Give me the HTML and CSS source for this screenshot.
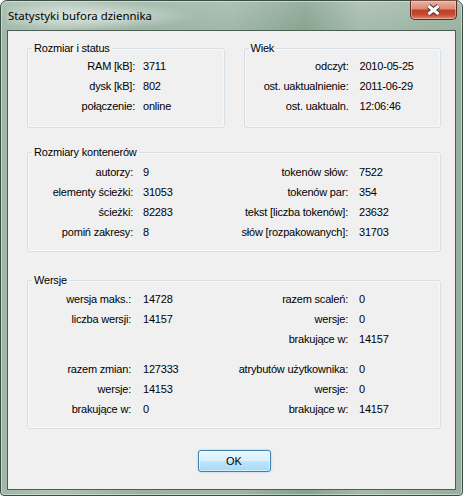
FILE: index.html
```html
<!DOCTYPE html>
<html lang="pl">
<head>
<meta charset="utf-8">
<title>Statystyki bufora dziennika</title>
<link rel="stylesheet" href="styles.css">
</head>
<body>
<div class="window">
  <div class="titlebar">
    <span class="title">Statystyki bufora dziennika</span>
    <button class="close" aria-label="Zamknij">
      <svg width="15" height="12" viewBox="0 0 15 12">
        <path d="M2.5 2 L12.5 10 M12.5 2 L2.5 10" stroke="#473533" stroke-width="5" stroke-linecap="butt" fill="none"/>
        <path d="M2.5 2 L12.5 10 M12.5 2 L2.5 10" stroke="#ffffff" stroke-width="3" stroke-linecap="butt" fill="none"/>
      </svg>
    </button>
  </div>
  <div class="client">
    <div class="toprow">
      <fieldset class="group g1">
        <legend>Rozmiar i status</legend>
        <div class="rows two lab8">
          <span class="lab">RAM [kB]:</span><span class="val">3711</span>
          <span class="lab">dysk [kB]:</span><span class="val">802</span>
          <span class="lab">połączenie:</span><span class="val">online</span>
        </div>
      </fieldset>
      <fieldset class="group g2">
        <legend>Wiek</legend>
        <div class="rows two lab11">
          <span class="lab">odczyt:</span><span class="val">2010-05-25</span>
          <span class="lab">ost. uaktualnienie:</span><span class="val">2011-06-29</span>
          <span class="lab">ost. uaktualn.</span><span class="val">12:06:46</span>
        </div>
      </fieldset>
    </div>
    <fieldset class="group g3">
      <legend>Rozmiary kontenerów</legend>
      <div class="rows four">
        <span class="lab l1">autorzy:</span><span class="val">9</span><span class="lab l2">tokenów słów:</span><span class="val">7522</span>
        <span class="lab l1">elementy ścieżki:</span><span class="val">31053</span><span class="lab l2">tokenów par:</span><span class="val">354</span>
        <span class="lab l1">ścieżki:</span><span class="val">82283</span><span class="lab l2">tekst [liczba tokenów]:</span><span class="val">23632</span>
        <span class="lab l1">pomiń zakresy:</span><span class="val">8</span><span class="lab l2">słów [rozpakowanych]:</span><span class="val">31703</span>
      </div>
    </fieldset>
    <fieldset class="group g4">
      <legend>Wersje</legend>
      <div class="rows four">
        <span class="lab l1">wersja maks.:</span><span class="val">14728</span><span class="lab l2">razem scaleń:</span><span class="val">0</span>
        <span class="lab l1">liczba wersji:</span><span class="val">14157</span><span class="lab l2">wersje:</span><span class="val">0</span>
        <span class="lab l1"></span><span class="val"></span><span class="lab l2">brakujące w:</span><span class="val">14157</span>
      </div>
      <div class="rows four second">
        <span class="lab l1">razem zmian:</span><span class="val">127333</span><span class="lab l2">atrybutów użytkownika:</span><span class="val">0</span>
        <span class="lab l1">wersje:</span><span class="val">14153</span><span class="lab l2">wersje:</span><span class="val">0</span>
        <span class="lab l1">brakujące w:</span><span class="val">0</span><span class="lab l2">brakujące w:</span><span class="val">14157</span>
      </div>
    </fieldset>
    <div class="actions">
      <button class="ok">OK</button>
    </div>
  </div>
</div>
</body>
</html>
```

FILE: styles.css
```css
html, body {
  margin: 0;
  padding: 0;
  background: #ffffff;
}

body {
  font-family: "Liberation Sans", Arial, sans-serif;
  font-size: 11px;
  letter-spacing: -0.2px;
  color: #000;
}

.window {
  box-sizing: border-box;
  width: 463px;
  height: 496px;
  border: 1px solid #3c4d44;
  border-radius: 7px 7px 4px 4px;
  padding: 0 6px 5px 6px;
  display: flex;
  flex-direction: column;
  background:
    linear-gradient(180deg, rgba(255,255,255,0.16) 0px, rgba(255,255,255,0) 34px),
    linear-gradient(90deg, #9fb8a8 0%, #adc2b4 12%, #98b2a1 30%, #9fb7a7 50%, #84a28e 66%, #a4baab 78%, #96b09f 100%);
  box-shadow: inset 0 0 0 1px rgba(230, 240, 234, 0.55);
}

.titlebar {
  height: 28px;
  display: flex;
  justify-content: space-between;
  align-items: flex-start;
  padding-left: 1px;
  background: radial-gradient(ellipse 110px 14px at 80px 15px, rgba(235,242,238,0.75), rgba(235,242,238,0));
}

.title {
  font-family: "Noto Sans", "Open Sans", sans-serif;
  font-size: 11.4px;
  letter-spacing: 0;
  line-height: 16px;
  margin-top: 7px;
  color: #000;
}

.close {
  width: 47px;
  height: 20px;
  margin-top: -1px;
  margin-right: -1px;
  padding: 0;
  border: 1px solid #5b2b22;
  border-top-color: #7e5048;
  border-radius: 0 0 5px 5px;
  background: linear-gradient(180deg, #edb0a0 0%, #d98a76 45%, #c13f27 50%, #c44a32 75%, #df876d 100%);
  box-shadow: inset 0 0 0 1px rgba(255, 220, 210, 0.45);
  display: flex;
  align-items: center;
  justify-content: center;
}

.close svg {
  display: block;
}

.client {
  flex: 1;
  margin-top: 1px;
  background: #f0f0f0;
  border: 1px solid #4d5d54;
  padding: 11px 14px 0 19px;
  display: flex;
  flex-direction: column;
}

.toprow {
  display: flex;
  gap: 19px;
}

.group {
  margin: 0;
  padding: 1px 0 11px 0;
  min-width: 0;
  border: 1px solid #d5dfe5;
  border-radius: 3px;
  box-shadow: inset 0 0 0 1px rgba(255,255,255,0.6);
}

.group legend {
  padding: 0 2px;
  margin-left: 4px;
  line-height: 13px;
  font-size: 11px;
}

.g1, .g2 {
  flex: 1;
}

.rows {
  display: grid;
  grid-auto-rows: 20px;
  align-items: center;
  line-height: 20px;
  white-space: nowrap;
}

.rows.two {
  grid-template-columns: 115px auto;
}

.rows .lab {
  text-align: right;
}

.lab8 .lab { padding-right: 8px; }
.lab11 .lab { padding-right: 11px; }

.rows.four {
  grid-template-columns: 115px 57px 159px auto;
}

.rows.four .l1 { padding-right: 10px; }
.rows.four .l2 { padding-right: 11px; }

.g3 {
  margin-top: 18px;
  padding-top: 3px;
  padding-bottom: 9px;
}

.g4 {
  margin-top: 22px;
  padding-top: 2px;
  padding-bottom: 9px;
}

.g4 .rows.four .l1 { padding-right: 12px; }

.rows.second {
  margin-top: 10px;
}

.actions {
  display: flex;
  justify-content: center;
  padding-top: 21px;
}

.ok {
  width: 73px;
  height: 22px;
  padding: 0;
  font-family: "Liberation Sans", Arial, sans-serif;
  font-size: 11px;
  color: #000;
  border: 1px solid #3c7fb1;
  border-radius: 3px;
  background: linear-gradient(180deg, #eaf6fd 0%, #d9f0fc 50%, #bee6fd 51%, #a7d9f5 100%);
  box-shadow: inset 0 0 0 1px rgba(255,255,255,0.55), 0 0 2px rgba(80, 170, 230, 0.6);
}
```
